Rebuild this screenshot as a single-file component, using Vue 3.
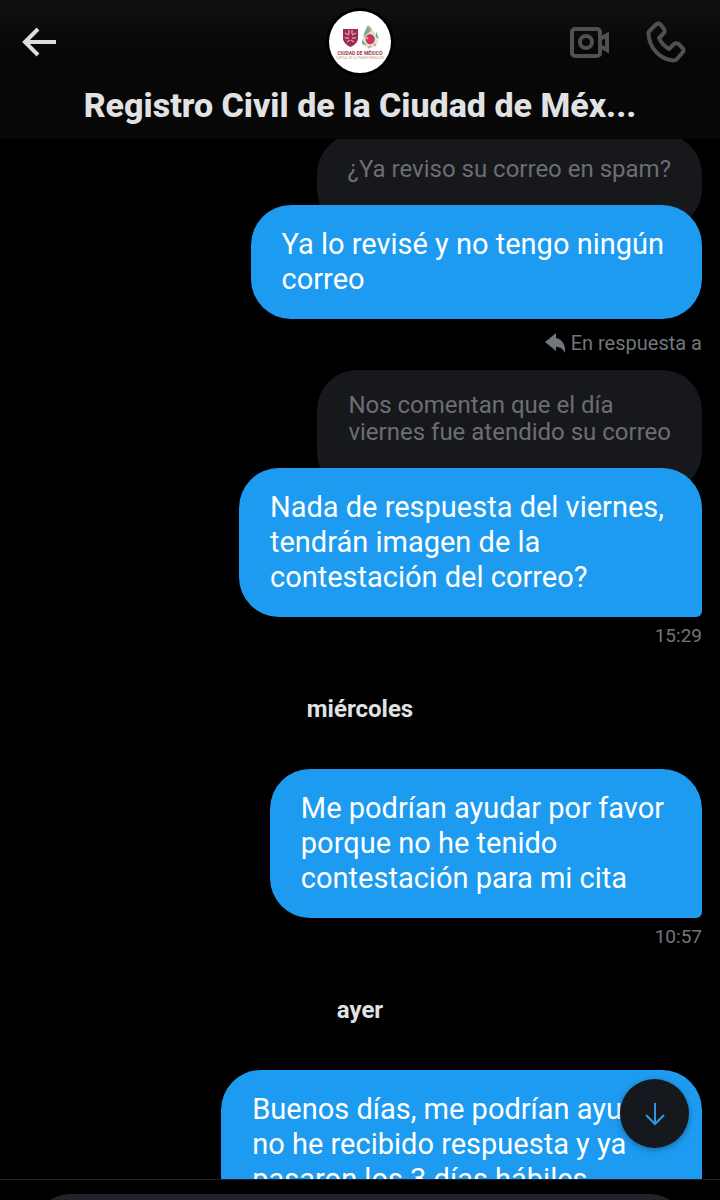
<template>
  <div class="chat">
    <header class="chat-header">
      <div class="header-bar">
        <button class="icon-btn back" aria-label="Atrás">
          <svg width="36" height="30" viewBox="0 0 36 30" fill="none" stroke="currentColor" stroke-width="4">
            <path d="M16 2L3 15l13 13M3 15h31" />
          </svg>
        </button>
        <div class="avatar">
          <svg width="62" height="62" viewBox="0 0 62 62" role="img" aria-label="Ciudad de México">
            <circle cx="31" cy="31" r="31" fill="#fff" />
            <path d="M14 18h15v9c0 4-3 7-7.500 9-4.500-2-7.500-5-7.500-9z" fill="#9f2a50" />
            <path d="M16 22l4 2M27 22l-4 2M16 27h4M23 27h4M18 31l3-2M25 31l-3-2M20 19v4M23 19v4" stroke="#ecc5d1" stroke-width="1" />
            <path d="M40 14l4 5 4 6 1 6-6 6-9-2-1-6 4-7z" fill="#d9e4d3" />
            <path d="M39 14l3 6-4 3-4 3 2-6zM47 20l3 8-3-2zM33 29l5 5-5-1z" fill="#79aa8a" />
            <path d="M41 23c4 1 6 4 4 8-2 3-7 3-8-1-1-3 0-6 4-7z" fill="#cf3159" />
            <path d="M36 25l3 3M45 33l2 2M40 16l2 3M42 35l-3 2" stroke="#df9a8d" stroke-width="2" />
            <text class="logo-name" x="31" y="44" text-anchor="middle">CIUDAD DE MÉXICO</text>
            <text class="logo-tag" x="31" y="48" text-anchor="middle">CAPITAL DE LA TRANSFORMACIÓN</text>
          </svg>
        </div>
        <div class="header-actions">
          <button class="icon-btn" aria-label="Videollamada">
            <svg width="40" height="32" viewBox="0 0 40 32" fill="none" stroke="currentColor" stroke-width="4">
              <rect x="2" y="3" width="28" height="27" rx="3" />
              <circle cx="16" cy="16" r="6" />
              <path d="M30 13l7-4v15l-7-4" />
            </svg>
          </button>
          <button class="icon-btn" aria-label="Llamar">
            <svg width="40" height="42" viewBox="0 0 40 42" fill="none" stroke="currentColor" stroke-width="4" stroke-linejoin="round">
              <path d="M3 10.500L10 3.500C11.500 2 13 2 14.500 3.500L18 8c1 1.500 1 3-.5 4.500L13 17c2 5 5 8 10 11l5-5c1.500-1 3-1 4.500 0l4 4c1.500 1.500 1.500 3 0 4.500L31 38c-1 1-2 1.500-4 1.500C14 38 3 27 2.500 12.500c0-1 0-1.500.5-2z" />
            </svg>
          </button>
        </div>
      </div>
      <h1 class="chat-title">Registro Civil de la Ciudad de Méx...</h1>
    </header>

    <main class="messages">
      <template v-for="item in items" :key="item.id">
        <h2 v-if="item.type === 'day'" class="day">{{ item.text }}</h2>
        <article v-else class="message">
          <div v-if="item.replyLabel" class="reply-label">
            <svg width="21" height="21" viewBox="0 0 21 21" fill="currentColor">
              <path d="M0 9L11 0v5c6 1 10 7 9 15-2-4-4-6-9-6v4z" />
            </svg>
            {{ item.replyLabel }}
          </div>
          <p v-if="item.quote" class="quote">{{ item.quote }}</p>
          <p class="bubble" :class="{ quoting: item.quote, tail: item.time }">{{ item.text }}</p>
          <time v-if="item.time" class="time">{{ item.time }}</time>
        </article>
      </template>
      <button class="scroll-down" aria-label="Ir al último mensaje">
        <svg width="20" height="24" viewBox="0 0 20 24" fill="none" stroke="currentColor" stroke-width="2">
          <path d="M10 1v21M1 13l9 9 9-9" />
        </svg>
      </button>
    </main>

    <footer class="composer">
      <input class="composer-input" type="text" aria-label="Mensaje" />
    </footer>
  </div>
</template>

<script setup>
const items = [
  {
    id: 1,
    quote: '¿Ya reviso su correo en spam?',
    text: 'Ya lo revisé y no tengo ningún\ncorreo'
  },
  {
    id: 2,
    replyLabel: 'En respuesta a',
    quote: 'Nos comentan que el día\nviernes fue atendido su correo',
    text: 'Nada de respuesta del viernes,\ntendrán imagen de la\ncontestación del correo?',
    time: '15:29'
  },
  { id: 3, type: 'day', text: 'miércoles' },
  {
    id: 4,
    text: 'Me podrían ayudar por favor\nporque no he tenido\ncontestación para mi cita',
    time: '10:57'
  },
  { id: 5, type: 'day', text: 'ayer' },
  {
    id: 6,
    text: 'Buenos días, me podrían ayudar\nno he recibido respuesta y ya\npasaron los 3 días hábiles'
  }
];
</script>

<style>
body {
  margin: 0;
  background: #000;
}
</style>

<style scoped>
.chat {
  display: flex;
  flex-direction: column;
  height: 100vh;
  overflow: hidden;
  background: #000;
  color: #e1e2e3;
  font-family: Roboto, "Noto Sans", sans-serif;
}

.chat-header {
  flex: none;
  box-sizing: border-box;
  height: 139px;
  padding: 8px 34px 0 22px;
  background: linear-gradient(#101113, #070707 50px);
}

.header-bar {
  display: grid;
  grid-template-columns: 1fr auto 1fr;
  align-items: center;
  margin-right: -12px;
}

.icon-btn {
  display: flex;
  padding: 0;
  border: none;
  background: none;
  color: #505051;
  cursor: pointer;
}

.back {
  color: #dddddd;
}

.avatar {
  display: flex;
  padding: 2px;
  border: 1px solid #000;
  border-radius: 50%;
  background: #000;
}

.logo-name {
  font-size: 5px;
  font-weight: 700;
  fill: #9f3558;
}

.logo-tag {
  font-size: 3px;
  fill: #c69a72;
}

.header-actions {
  display: flex;
  align-items: center;
  justify-content: flex-end;
  gap: 36px;
  padding-right: 12px;
}

.chat-title {
  margin: 7px -12px 0 0;
  font-size: 34px;
  font-weight: 800;
  line-height: 44px;
  text-align: center;
  white-space: nowrap;
}

.messages {
  position: relative;
  flex: 1;
  min-height: 0;
  overflow: hidden;
  padding: 0 18px;
}

.message {
  display: flex;
  flex-direction: column;
  align-items: flex-end;
}

.message:first-child {
  margin-top: -5px;
}

.reply-label {
  display: flex;
  align-items: center;
  gap: 5px;
  margin: 12px 0 15px;
  color: #71767b;
  font-size: 20px;
  line-height: 24px;
}

.quote,
.bubble {
  margin: 0;
  border-radius: 40px;
  white-space: pre-line;
}

.quote {
  padding: 22px 31px 46px;
  background: #17181c;
  color: #6c6e72;
  font-size: 24px;
  line-height: 27px;
}

.bubble {
  padding: 22px 38px 22px 31px;
  background: #1d9bf0;
  color: #fff;
  font-size: 29px;
  line-height: 35px;
}

.quoting {
  margin-top: -24px;
}

.tail {
  border-bottom-right-radius: 6px;
}

.time {
  margin-top: 7px;
  color: #71767b;
  font-size: 19px;
  line-height: 24px;
}

.day {
  margin: 46px 0 45px;
  font-size: 24px;
  font-weight: 700;
  line-height: 30px;
  text-align: center;
}

.scroll-down {
  position: absolute;
  right: 31px;
  bottom: 31px;
  display: flex;
  align-items: center;
  justify-content: center;
  width: 69px;
  height: 69px;
  padding: 0;
  border: none;
  border-radius: 50%;
  background: #15181c;
  box-shadow: 0 2px 6px rgba(0, 0, 0, 0.3);
  color: #2f97e0;
  cursor: pointer;
}

.composer {
  display: flex;
  flex: none;
  align-items: flex-start;
  box-sizing: border-box;
  height: 21px;
  overflow: hidden;
  padding: 14px 34px 0;
  border-top: 1px solid #1f2022;
}

.composer-input {
  flex: 1;
  box-sizing: border-box;
  min-width: 0;
  height: 72px;
  border: none;
  border-radius: 36px;
  background: #202327;
  color: #e1e2e3;
}
</style>
